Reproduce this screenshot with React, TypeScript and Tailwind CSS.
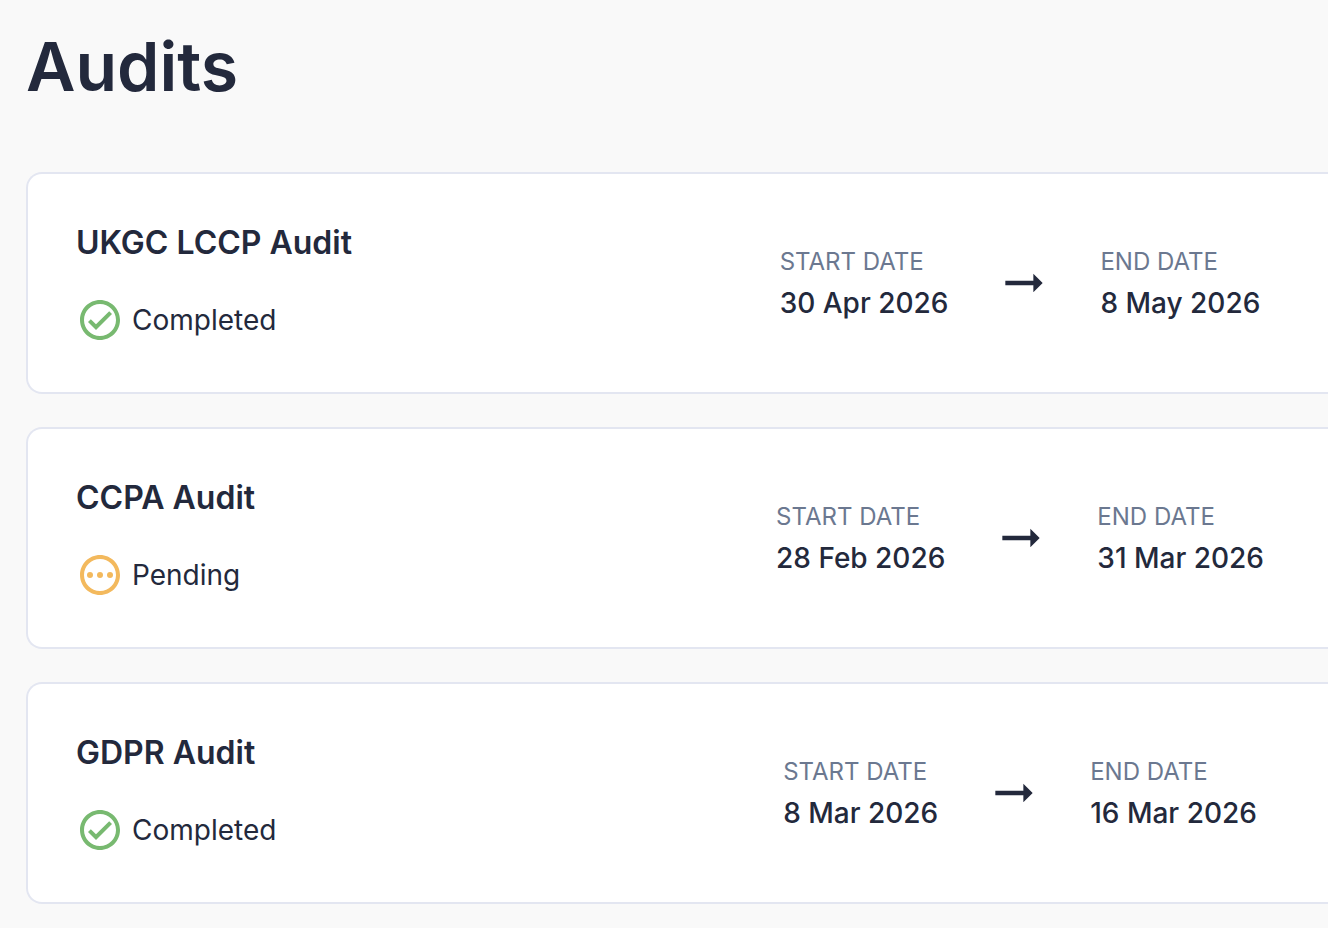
import type { ReactNode } from "react"

type Status = "completed" | "pending"

type Audit = {
  name: string
  status: Status
  start: string
  end: string
}

const audits: Audit[] = [
  { name: "UKGC LCCP Audit", status: "completed", start: "30 Apr 2026", end: "8 May 2026" },
  { name: "CCPA Audit", status: "pending", start: "28 Feb 2026", end: "31 Mar 2026" },
  { name: "GDPR Audit", status: "completed", start: "8 Mar 2026", end: "16 Mar 2026" },
]

function CompletedIcon() {
  return (
    <svg aria-hidden viewBox="0 0 24 24" className="size-12 shrink-0 fill-[#78b970]">
      <path d="M12 2C6.48 2 2 6.48 2 12s4.48 10 10 10 10-4.48 10-10S17.52 2 12 2m0 18c-4.41 0-8-3.59-8-8s3.59-8 8-8 8 3.59 8 8-3.59 8-8 8m4.59-12.42L10 14.17l-2.59-2.58L6 13l4 4 8-8z" />
    </svg>
  )
}

function PendingIcon() {
  return (
    <svg aria-hidden viewBox="0 0 24 24" className="size-12 shrink-0 fill-[#f3b95d]">
      <path d="M12 2C6.48 2 2 6.48 2 12s4.48 10 10 10 10-4.48 10-10S17.52 2 12 2m0 18c-4.41 0-8-3.59-8-8s3.59-8 8-8 8 3.59 8 8-3.59 8-8 8" />
      <circle cx="7" cy="12" r="1.5" />
      <circle cx="12" cy="12" r="1.5" />
      <circle cx="17" cy="12" r="1.5" />
    </svg>
  )
}

function ArrowIcon() {
  return (
    <svg aria-hidden viewBox="0 0 24 24" className="size-14 shrink-0 fill-current">
      <path d="M16.01 11H4v2h12.01v3L20 12l-3.99-4z" />
    </svg>
  )
}

const statuses: Record<Status, { label: string; icon: ReactNode }> = {
  completed: { label: "Completed", icon: <CompletedIcon /> },
  pending: { label: "Pending", icon: <PendingIcon /> },
}

function DateField({ label, value }: { label: string; value: string }) {
  return (
    <div className="whitespace-nowrap">
      <dt className="text-2xl leading-10 text-[#6b7890] uppercase">{label}</dt>
      <dd className="text-[28px] leading-[42px] font-medium">{value}</dd>
    </div>
  )
}

function AuditCard({ audit }: { audit: Audit }) {
  const status = statuses[audit.status]

  return (
    <li className="flex items-center rounded-l-2xl border-2 border-r-0 border-[#e3e6f1] bg-white py-12 pr-7 pl-12">
      <div className="flex grow flex-col gap-8">
        <h2 className="text-[32px] leading-[42px] font-semibold">{audit.name}</h2>
        <div className="flex items-center gap-2 text-[28px] leading-10">
          {status.icon}
          {status.label}
        </div>
      </div>
      <dl className="flex w-[560px] shrink-0 items-center justify-center gap-12">
        <DateField label="Start date" value={audit.start} />
        <ArrowIcon />
        <DateField label="End date" value={audit.end} />
      </dl>
    </li>
  )
}

export default function App() {
  return (
    <main className="min-h-screen bg-[#f9f9f9] pt-6 pb-6 pl-[26px] font-['Inter',sans-serif] text-[#23293c]">
      <h1 className="mb-16 text-[68px] leading-[84px] font-semibold">Audits</h1>
      <ul className="flex flex-col gap-[33px]">
        {audits.map((audit) => (
          <AuditCard key={audit.name} audit={audit} />
        ))}
      </ul>
    </main>
  )
}
